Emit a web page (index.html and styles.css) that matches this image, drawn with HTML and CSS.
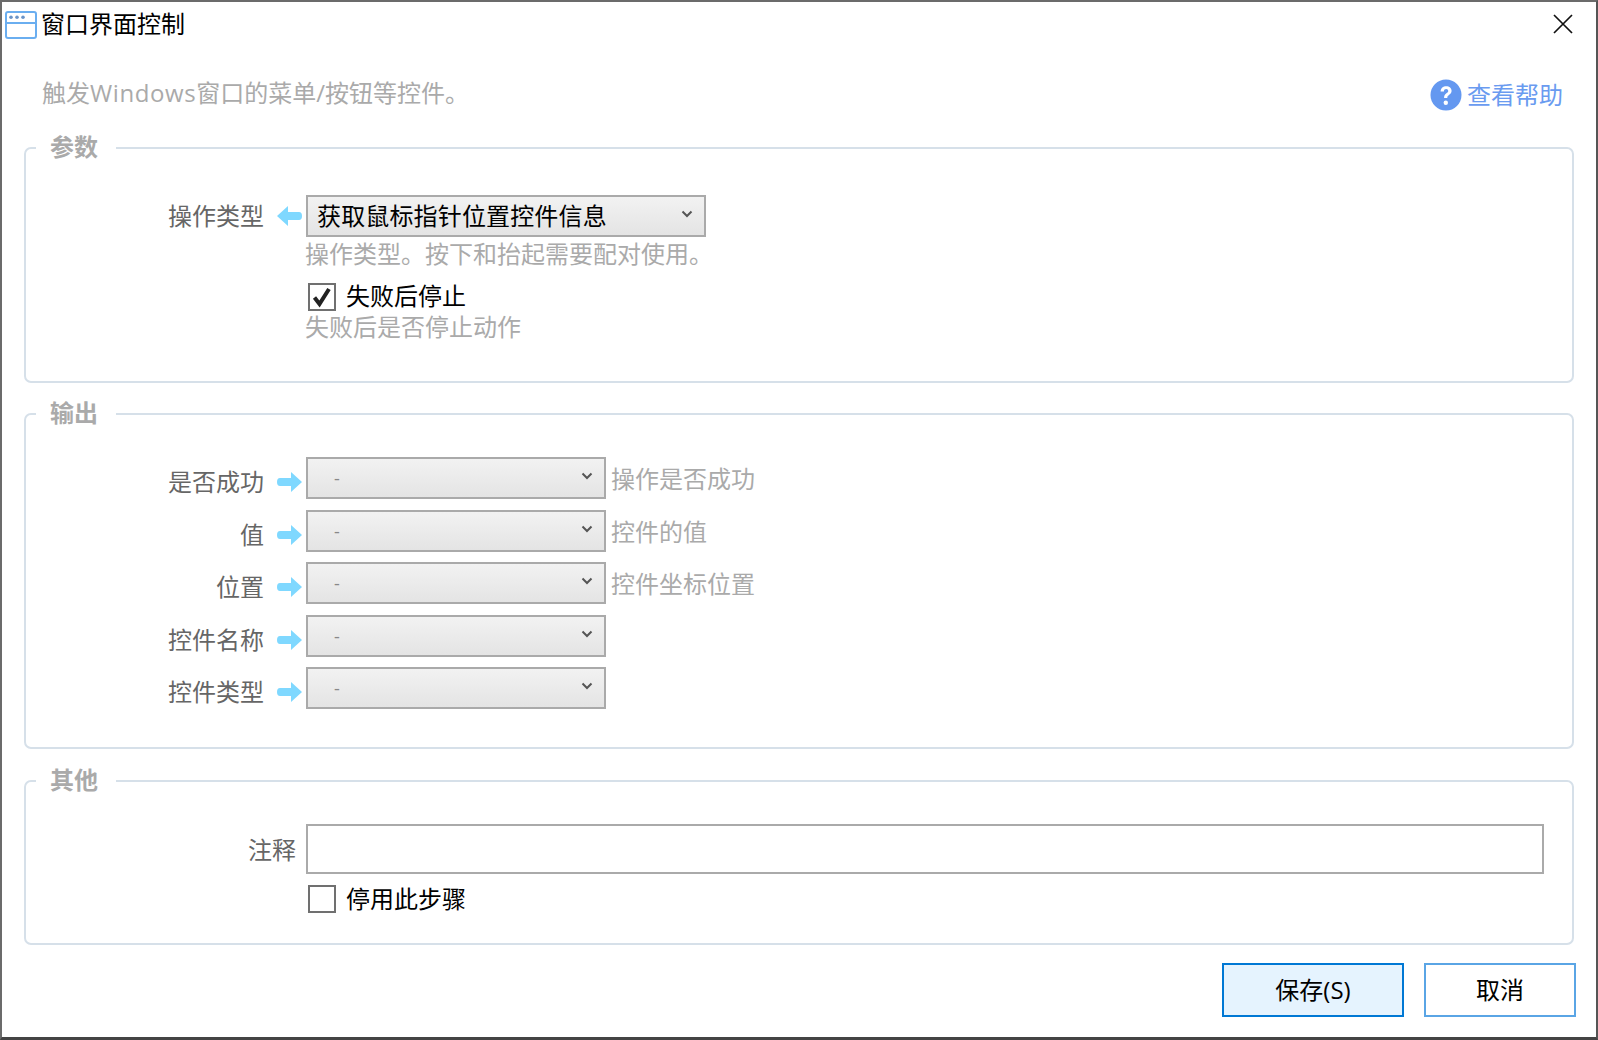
FILE: index.html
```html
<!DOCTYPE html>
<html lang="zh-CN">
<head>
<meta charset="utf-8">
<title>窗口界面控制</title>
<link rel="stylesheet" href="styles.css">
</head>
<body>
<div class="window">
  <header class="titlebar">
    <svg class="app-icon" width="32" height="28" viewBox="0 0 32 28"><rect x="1" y="1" width="30" height="26" rx="2" fill="#fff" stroke="#6aaef0" stroke-width="2"/><path d="M1 12h30" stroke="#6aaef0" stroke-width="2"/><circle cx="6" cy="6.3" r="1.8" fill="#6a94c8"/><circle cx="12" cy="6.3" r="1.8" fill="#6a94c8"/><circle cx="18" cy="6.3" r="1.8" fill="#6a94c8"/></svg>
    <span class="title">窗口界面控制</span>
    <svg class="close" width="20" height="20" viewBox="0 0 20 20"><path d="M1 1l18 18M19 1L1 19" stroke="#111" stroke-width="1.7" fill="none"/></svg>
  </header>
  <div class="intro">
    <span class="intro-text">触发<span class="latin">Windows</span>窗口的菜单/按钮等控件。</span>
    <span class="help">
      <svg width="32" height="32" viewBox="0 0 32 32"><circle cx="16" cy="16" r="15.5" fill="#6498f0"/><path d="M10.6 12.4c.2-3.4 2.5-5.2 5.6-5.2 3.200 0 5.400 1.900 5.400 4.600 0 2-1 3.100-2.600 4.200-1.300.9-1.700 1.500-1.700 3h-3.200c-.1-2.300.6-3.500 2.300-4.700 1.200-.8 1.800-1.400 1.800-2.400 0-1.100-.8-1.900-2-1.900-1.300 0-2.200.8-2.300 2.400z" fill="#fff"/><circle cx="15.800" cy="23.800" r="2.200" fill="#fff"/></svg>
      <span class="help-text">查看帮助</span>
    </span>
  </div>

  <fieldset class="group group-params">
    <legend>参数</legend>
    <div class="row">
      <span class="label">操作类型</span>
      <svg class="arrow" width="25" height="20" viewBox="0 0 25 20"><path d="M0 10l11-10v6h11q3 0 3 4t-3 4h-11v6z" fill="#7fd8ff"/></svg>
      <div class="select select-wide"><span class="value">获取鼠标指针位置控件信息</span><svg class="chevron" width="12" height="8" viewBox="0 0 12 8"><path d="M1.500 1.500l4.500 4.500 4.500-4.500" fill="none" stroke="#555" stroke-width="2"/></svg></div>
    </div>
    <p class="hint hint-indent hint-first">操作类型。按下和抬起需要配对使用。</p>
    <label class="check"><span class="box"><svg width="24" height="24" viewBox="0 0 24 24"><path d="M4.500 12.500l5 6.500 9.500-15" fill="none" stroke="#222" stroke-width="4"/></svg></span><span class="check-text">失败后停止</span></label>
    <p class="hint hint-indent hint-last">失败后是否停止动作</p>
  </fieldset>

  <fieldset class="group group-output">
    <legend>输出</legend>
    <div class="rows">
      <div class="row">
        <div class="cap"><span class="label">是否成功</span><svg class="arrow" width="25" height="20" viewBox="0 0 25 20"><path d="M25 10l-11-10v6h-11q-3 0-3 4t3 4h11v6z" fill="#7fd8ff"/></svg></div>
        <div class="select select-out"><span class="dash">-</span><svg class="chevron" width="12" height="8" viewBox="0 0 12 8"><path d="M1.500 1.500l4.500 4.500 4.500-4.500" fill="none" stroke="#555" stroke-width="2"/></svg></div>
        <span class="hint side">操作是否成功</span>
      </div>
      <div class="row">
        <div class="cap"><span class="label">值</span><svg class="arrow" width="25" height="20" viewBox="0 0 25 20"><path d="M25 10l-11-10v6h-11q-3 0-3 4t3 4h11v6z" fill="#7fd8ff"/></svg></div>
        <div class="select select-out"><span class="dash">-</span><svg class="chevron" width="12" height="8" viewBox="0 0 12 8"><path d="M1.500 1.500l4.500 4.500 4.500-4.500" fill="none" stroke="#555" stroke-width="2"/></svg></div>
        <span class="hint side">控件的值</span>
      </div>
      <div class="row">
        <div class="cap"><span class="label">位置</span><svg class="arrow" width="25" height="20" viewBox="0 0 25 20"><path d="M25 10l-11-10v6h-11q-3 0-3 4t3 4h11v6z" fill="#7fd8ff"/></svg></div>
        <div class="select select-out"><span class="dash">-</span><svg class="chevron" width="12" height="8" viewBox="0 0 12 8"><path d="M1.500 1.500l4.500 4.500 4.500-4.500" fill="none" stroke="#555" stroke-width="2"/></svg></div>
        <span class="hint side">控件坐标位置</span>
      </div>
      <div class="row">
        <div class="cap"><span class="label">控件名称</span><svg class="arrow" width="25" height="20" viewBox="0 0 25 20"><path d="M25 10l-11-10v6h-11q-3 0-3 4t3 4h11v6z" fill="#7fd8ff"/></svg></div>
        <div class="select select-out"><span class="dash">-</span><svg class="chevron" width="12" height="8" viewBox="0 0 12 8"><path d="M1.500 1.500l4.500 4.500 4.500-4.500" fill="none" stroke="#555" stroke-width="2"/></svg></div>
      </div>
      <div class="row">
        <div class="cap"><span class="label">控件类型</span><svg class="arrow" width="25" height="20" viewBox="0 0 25 20"><path d="M25 10l-11-10v6h-11q-3 0-3 4t3 4h11v6z" fill="#7fd8ff"/></svg></div>
        <div class="select select-out"><span class="dash">-</span><svg class="chevron" width="12" height="8" viewBox="0 0 12 8"><path d="M1.500 1.500l4.500 4.500 4.500-4.500" fill="none" stroke="#555" stroke-width="2"/></svg></div>
      </div>
    </div>
  </fieldset>

  <fieldset class="group group-other">
    <legend>其他</legend>
    <div class="row">
      <span class="label label-note">注释</span>
      <div class="input"></div>
    </div>
    <label class="check check-off"><span class="box"></span><span class="check-text">停用此步骤</span></label>
  </fieldset>

  <footer class="footer">
    <button class="btn btn-primary" type="button">保存(S)</button>
    <button class="btn btn-cancel" type="button">取消</button>
  </footer>
</div>
</body>
</html>
```
FILE: styles.css
```css
* { box-sizing: border-box; }
html, body { margin: 0; padding: 0; }
body {
  width: 1598px;
  height: 1040px;
  overflow: hidden;
  background: #444;
  font-family: "Open Sans", "Noto Sans CJK SC", "Noto Sans", sans-serif;
  font-size: 24px;
  color: #000;
}
.window {
  width: 1598px;
  height: 1040px;
  background: #fff;
  border-style: solid;
  border-color: #6b6b6b #555 #444 #6b6b6b;
  border-width: 2px 2px 3px 2px;
  display: flex;
  flex-direction: column;
}
.titlebar {
  height: 46px;
  display: flex;
  align-items: center;
  padding: 0 23px 0 3px;
  flex: none;
}
.app-icon { flex: none; }
.title { margin-left: 4px; padding-bottom: 3px; line-height: 34px; }
.close { margin-left: auto; margin-bottom: 2px; }
.intro {
  height: 46px;
  margin-top: 24px;
  margin-bottom: 14px;
  padding: 0 33px 0 40px;
  display: flex;
  align-items: center;
  justify-content: space-between;
  flex: none;
}
.intro-text { color: #aaa; padding-bottom: 5px; line-height: 34px; }
.latin { letter-spacing: 0.6px; }
.help {
  display: flex;
  align-items: center;
  gap: 5px;
  color: #6a9bf0;
}
.help-text { line-height: 34px; }
.group {
  margin: 0 22px 0 22px;
  padding: 0;
  border: 2px solid #d6e0e9;
  border-radius: 7px;
  min-width: 0;
  flex: none;
}
.group legend {
  margin-left: 10px;
  padding: 0 18px 0 14px;
  font-weight: 700;
  color: #aaa;
  line-height: 30px;
  height: 32px;
}
.group + .group { margin-top: 15px; }
.group-params { padding-top: 31px; height: 251px; }
.group-output { padding-top: 27px; height: 351px; }
.group + .group-other { margin-top: 16px; padding-top: 27px; height: 180px; }

.row { display: flex; align-items: center; }
.rows { display: flex; flex-direction: column; gap: 10.5px; }
.label {
  width: 238px;
  flex: none;
  text-align: right;
  color: #666;
  line-height: 34px;
}
.arrow { flex: none; margin-left: 13px; margin-right: 4px; }
.cap { display: flex; align-items: center; padding-top: 8px; flex: none; }
.select {
  height: 42px;
  border: 2px solid #aaa;
  background: linear-gradient(#f2f2f2, #e4e4e4);
  display: flex;
  align-items: center;
  flex: none;
}
.select-wide { width: 400px; padding-left: 9px; }
.select-out { width: 300px; padding-left: 26px; }
.value { line-height: 34px; letter-spacing: 0.15px; }
.dash { color: #888; font-size: 18px; line-height: 34px; }
.chevron { margin-left: auto; margin-right: 11px; margin-bottom: 4px; flex: none; }
.hint { color: #aaa; line-height: 34px; margin: 0; }
.hint-indent { margin-left: 279px; }
.hint-first { height: 34px; }
.hint-last { line-height: 26px; }
.side { margin-left: 5px; padding-top: 2px; }
.check {
  display: flex;
  align-items: center;
  gap: 10px;
  margin: 9px 0 0 282px;
  height: 34px;
}
.check-text { padding-bottom: 3px; line-height: 34px; }
.box {
  width: 28px;
  height: 28px;
  border: 2px solid #707070;
  background: #fff;
  display: flex;
  align-items: center;
  justify-content: center;
  flex: none;
}
.label-note { width: 270px; margin-right: 10px; padding-top: 2px; }
.input {
  flex: 1;
  height: 50px;
  margin-right: 28px;
  border: 2px solid #aaa;
  background: #fff;
}
.check-off { margin-top: 8px; }
.check-off .check-text { padding-bottom: 1px; }
.footer {
  display: flex;
  justify-content: flex-end;
  gap: 20px;
  margin-top: 18px;
  padding-right: 20px;
  flex: none;
}
.btn {
  height: 54px;
  font: inherit;
  color: #000;
  padding: 0 0 4px;
  border-style: solid;
  border-width: 2px;
}
.btn-primary { width: 182px; background: #e5f3fe; border-color: #0078d4; }
.btn-cancel { width: 152px; background: #fff; border-color: #5aa5e5; }
```
